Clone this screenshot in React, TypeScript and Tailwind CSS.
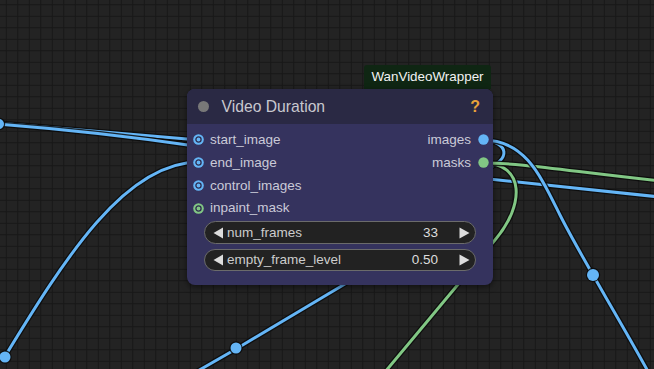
import React from "react";

const BLUE = "#64b5f6";
const GREEN = "#81c784";

function InDot({ color }: { color: string }) {
  return (
    <svg width="11" height="11" viewBox="0 0 11 11" className="shrink-0">
      <circle cx="5.5" cy="5.5" r="5.3" fill={color} />
      <circle cx="5.5" cy="5.5" r="2.6" fill={color} stroke="#2d2c4e" strokeWidth="1.3" />
    </svg>
  );
}

function OutDot({ color }: { color: string }) {
  return (
    <svg width="11" height="11" viewBox="0 0 11 11" className="shrink-0">
      <circle cx="5.5" cy="5.5" r="5.2" fill={color} />
    </svg>
  );
}

function Row({ left, leftColor, right, rightColor }: { left: string; leftColor: string; right?: string; rightColor?: string }) {
  return (
    <div className="h-[22.7px] flex items-center justify-between">
      <div className="flex items-center pl-[6px] gap-[6px]">
        <InDot color={leftColor} />
        <span className="text-[13.5px] text-[#cacad8] leading-none">{left}</span>
      </div>
      {right && rightColor ? (
        <div className="flex items-center pr-[4px] gap-[7px]">
          <span className="text-[13.5px] text-[#cacad8] leading-none">{right}</span>
          <OutDot color={rightColor} />
        </div>
      ) : null}
    </div>
  );
}

function LeftArrow() {
  return (
    <svg width="10" height="12" viewBox="0 0 10 12" className="shrink-0">
      <polygon points="10,0.5 0.5,6 10,11.5" fill="#dddddd" />
    </svg>
  );
}

function RightArrow() {
  return (
    <svg width="11" height="12" viewBox="0 0 11 12" className="shrink-0">
      <polygon points="0.5,0.5 10.5,6 0.5,11.5" fill="#dddddd" />
    </svg>
  );
}

function Widget({ label, value }: { label: string; value: string }) {
  return (
    <div className="h-[22.6px] rounded-full bg-[#222222] border border-[#6b6b6b] flex items-center pl-[8px] pr-[5px] text-[13.5px] leading-none">
      <LeftArrow />
      <span className="ml-[4px] text-[#cccccc]">{label}</span>
      <span className="ml-auto text-[#dddddd]">{value}</span>
      <span className="ml-[21px] flex">
        <RightArrow />
      </span>
    </div>
  );
}

function Wire({ d, color }: { d: string; color: string }) {
  return (
    <g fill="none" strokeLinecap="round" strokeLinejoin="round">
      <path d={d} stroke="#0b0b0b" strokeOpacity="0.85" strokeWidth="5.5" />
      <path d={d} stroke={color} strokeWidth="3" />
    </g>
  );
}

function WireDot({ cx, cy, r, color }: { cx: number; cy: number; r: number; color: string }) {
  return (
    <g>
      <circle cx={cx} cy={cy} r={r + 1.2} fill="#0b0b0b" fillOpacity="0.85" />
      <circle cx={cx} cy={cy} r={r} fill={color} />
    </g>
  );
}

export default function App() {
  return (
    <div className="relative w-[654px] h-[369px] overflow-hidden bg-[#232323] bg-[linear-gradient(to_right,#171717_1px,transparent_1px),linear-gradient(to_bottom,#171717_1px,transparent_1px)] [background-size:11.5px_11.5px] [background-position:5.8px_4.3px] font-['Liberation_Sans',Arial,sans-serif]">
      <svg className="absolute inset-0" width="654" height="369" viewBox="0 0 654 369">
        <Wire d="M -3 123 L 199 140" color={BLUE} />
        <Wire d="M -3 124 Q 100 132 195 146" color={BLUE} />
        <WireDot cx={-1} cy={124} r={5} color={BLUE} />
        <Wire d="M 199 162 C 125 162 65 258 4 358" color={BLUE} />
        <WireDot cx={5} cy={357} r={5.5} color={BLUE} />
        <Wire d="M 196 372 L 236 349 L 360 275" color={BLUE} />
        <WireDot cx={236} cy={348} r={5.5} color={BLUE} />
        <Wire d="M 470 177 L 660 197" color={BLUE} />
        <Wire d="M 483 140 C 510 142 510 160 488 168" color={BLUE} />
        <Wire d="M 483 163 C 525 163 525 205 495 240 C 470 270 420 330 385 372" color={GREEN} />
        <Wire d="M 483 163 C 520 163 560 170 660 181" color={GREEN} />
        <Wire d="M 483 140 C 525 140 540 175 560 215 S 620 320 650 375" color={BLUE} />
        <WireDot cx={593} cy={275} r={6} color={BLUE} />
      </svg>

      <div className="absolute left-[364px] top-[65px] w-[127px] h-[24px] bg-[#0f2613] rounded-t-[3px] flex items-center justify-center text-[13.4px] text-[#f2f2f2] leading-none">
        WanVideoWrapper
      </div>

      <div className="absolute left-[187px] top-[89px] w-[306px] h-[196px] rounded-[8px] bg-[#35335e] shadow-[0_2px_6px_rgba(0,0,0,0.55)] flex flex-col overflow-hidden">
        <div className="h-[35px] bg-[#2a2944] flex items-center pl-[11px] pr-[13px] shrink-0">
          <div className="w-[10.6px] h-[10.6px] rounded-full bg-[#787878]" />
          <span className="ml-[13px] text-[15.7px] text-[#c8c8cf] leading-none">Video Duration</span>
          <span className="ml-auto text-[16px] font-bold text-[#e8a23a] leading-none">?</span>
        </div>
        <div className="flex flex-col pt-[4.6px]">
          <Row left="start_image" leftColor={BLUE} right="images" rightColor={BLUE} />
          <Row left="end_image" leftColor={BLUE} right="masks" rightColor={GREEN} />
          <Row left="control_images" leftColor={BLUE} />
          <Row left="inpaint_mask" leftColor={GREEN} />
        </div>
        <div className="flex flex-col gap-[4.8px] mt-[2px] px-[17px]">
          <Widget label="num_frames" value="33" />
          <Widget label="empty_frame_level" value="0.50" />
        </div>
      </div>
    </div>
  );
}
